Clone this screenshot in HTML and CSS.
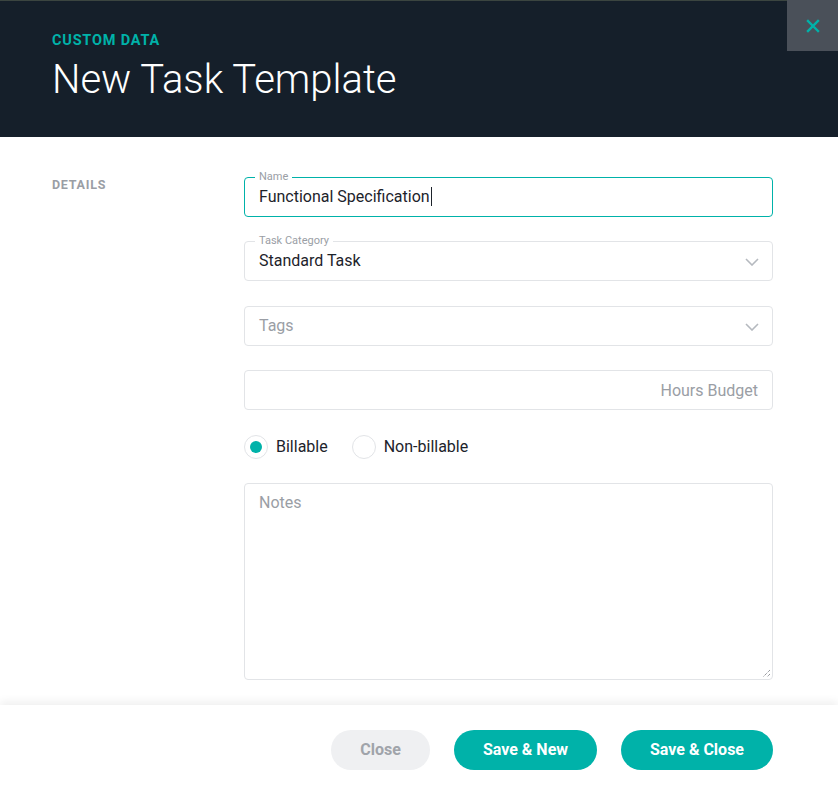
FILE: index.html
```html
<!DOCTYPE html>
<html lang="en">
<head>
<meta charset="utf-8">
<title>New Task Template</title>
<link rel="stylesheet" href="styles.css">
</head>
<body>
<div class="modal">
  <header class="modal-head">
    <div class="eyebrow">CUSTOM DATA</div>
    <h1 class="title">New Task Template</h1>
    <button class="close-x" aria-label="Close">
      <svg width="14" height="14" viewBox="0 0 14 14"><path d="M2 2 L12 12 M12 2 L2 12" stroke="#00b2a9" stroke-width="2.4" stroke-linecap="square"/></svg>
    </button>
  </header>

  <main class="modal-body">
    <div class="section-label">DETAILS</div>
    <div class="fields">
      <div class="field focused">
        <span class="legend">Name</span>
        <span class="value">Functional Specification<span class="caret"></span></span>
      </div>
      <div class="field">
        <span class="legend">Task Category</span>
        <span class="value">Standard Task</span>
        <svg class="chev" width="14" height="8" viewBox="0 0 14 8"><path d="M1 1 L7 7 L13 1" fill="none" stroke="#b5b9bf" stroke-width="1.6"/></svg>
      </div>
      <div class="field">
        <span class="placeholder">Tags</span>
        <svg class="chev" width="14" height="8" viewBox="0 0 14 8"><path d="M1 1 L7 7 L13 1" fill="none" stroke="#b5b9bf" stroke-width="1.6"/></svg>
      </div>
      <div class="field right">
        <span class="placeholder">Hours Budget</span>
      </div>
      <div class="radios">
        <label class="radio"><span class="dot checked"></span>Billable</label>
        <label class="radio"><span class="dot"></span>Non-billable</label>
      </div>
      <div class="notes">
        <span class="placeholder">Notes</span>
        <svg class="grip" width="9" height="9" viewBox="0 0 9 9"><path d="M8 1 L1 8 M8 5 L5 8" stroke="#6b6f75" stroke-width="1" stroke-dasharray="1 1"/></svg>
      </div>
    </div>
  </main>

  <footer class="modal-foot">
    <button class="btn ghost">Close</button>
    <button class="btn primary new">Save &amp; New</button>
    <button class="btn primary save-close">Save &amp; Close</button>
  </footer>
</div>
</body>
</html>
```

FILE: styles.css
```css
* { box-sizing: border-box; }

html, body {
  margin: 0;
  padding: 0;
  background: #ffffff;
  font-family: Roboto, "Liberation Sans", Arial, sans-serif;
}

.modal {
  width: 838px;
  height: 791px;
  display: flex;
  flex-direction: column;
  overflow: hidden;
}

.modal-head {
  position: relative;
  height: 137px;
  flex: none;
  background: #151f2a;
  border-top: 1px solid #3b4540;
  padding: 32px 52px 0;
}

.eyebrow {
  color: #00b2a9;
  font-size: 14.5px;
  font-weight: 700;
  letter-spacing: 0.8px;
  line-height: 16px;
}

.title {
  margin: 7px 0 0;
  color: #ffffff;
  font-size: 40px;
  font-weight: 300;
  line-height: 48px;
  letter-spacing: 0;
}

.close-x {
  position: absolute;
  top: -1px;
  right: 0;
  width: 51px;
  height: 51px;
  border: 0;
  padding: 0;
  background: #4a5059;
  display: flex;
  align-items: center;
  justify-content: center;
  cursor: pointer;
}

.modal-body {
  flex: 1;
  display: flex;
  padding: 40px 65px 0 52px;
}

.section-label {
  width: 192px;
  flex: none;
  color: #9a9ea5;
  font-size: 12.5px;
  font-weight: 700;
  letter-spacing: 0.75px;
  line-height: 14px;
  margin-top: 1px;
}

.fields {
  flex: 1;
  display: flex;
  flex-direction: column;
  gap: 24.4px;
}

.field {
  position: relative;
  height: 40px;
  flex: none;
  border: 1px solid #e2e4e7;
  border-radius: 4px;
  display: flex;
  align-items: center;
  padding: 0 14px;
  font-size: 16px;
  color: #1d232b;
}

.field.focused {
  border-color: #00b2a9;
}

.field.right {
  justify-content: flex-end;
}

.legend {
  position: absolute;
  top: -8px;
  left: 10px;
  padding: 0 4px;
  background: #ffffff;
  color: #9a9ea5;
  font-size: 11px;
  line-height: 14px;
}

.value {
  display: inline-flex;
  align-items: center;
  margin-top: -1px;
}

.caret {
  display: inline-block;
  width: 1px;
  height: 19px;
  background: #1d232b;
  margin-left: 1px;
}

.placeholder {
  color: #9a9ea5;
  font-size: 16px;
}

.chev {
  position: absolute;
  right: 13px;
  top: 16px;
}

.radios {
  display: flex;
  align-items: center;
  gap: 24px;
  height: 24px;
  flex: none;
}

.radio {
  display: flex;
  align-items: center;
  gap: 8px;
  font-size: 16px;
  color: #1d232b;
}

.dot {
  width: 24px;
  height: 24px;
  border-radius: 50%;
  border: 1px solid #e2e4e7;
  background: #fff;
  position: relative;
}

.dot.checked::after {
  content: "";
  position: absolute;
  left: 5px;
  top: 5px;
  width: 12px;
  height: 12px;
  border-radius: 50%;
  background: #00b2a9;
}

.notes {
  position: relative;
  height: 197px;
  flex: none;
  border: 1px solid #e2e4e7;
  border-radius: 4px;
  padding: 9px 14px;
}

.grip {
  position: absolute;
  right: 1px;
  bottom: 1px;
}

.modal-foot {
  flex: none;
  height: 86px;
  display: flex;
  justify-content: flex-end;
  align-items: center;
  gap: 24px;
  padding: 3px 65px 0 0;
  background: #fff;
  box-shadow: 0 -4px 8px rgba(0, 0, 0, 0.06);
  position: relative;
}

.btn {
  height: 40px;
  flex: none;
  border: 0;
  border-radius: 20px;
  font-family: Roboto, "Liberation Sans", Arial, sans-serif;
  font-size: 16px;
  font-weight: 700;
  padding: 0;
  white-space: nowrap;
  cursor: pointer;
}

.btn.ghost {
  width: 99px;
  background: #eff0f2;
  color: #a0a4aa;
}

.btn.primary {
  background: #00b2a9;
  color: #ffffff;
}

.btn.new { width: 143px; }
.btn.save-close { width: 152px; }
```
